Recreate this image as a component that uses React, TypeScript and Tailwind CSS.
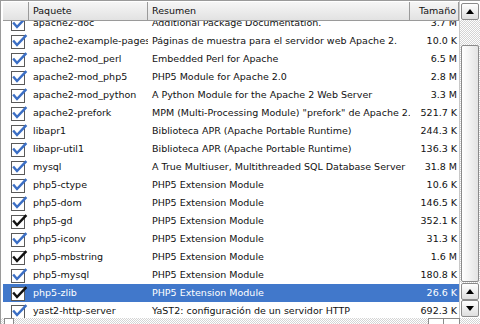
import React from 'react'

type Row = { name: string; summary: string; size: string; dark?: boolean }

const rows: Row[] = [
  { name: 'apache2-doc', summary: 'Additional Package Documentation.', size: '3.7 M' },
  { name: 'apache2-example-pages', summary: 'Páginas de muestra para el servidor web Apache 2.', size: '10.0 K' },
  { name: 'apache2-mod_perl', summary: 'Embedded Perl for Apache', size: '6.5 M' },
  { name: 'apache2-mod_php5', summary: 'PHP5 Module for Apache 2.0', size: '2.8 M' },
  { name: 'apache2-mod_python', summary: 'A Python Module for the Apache 2 Web Server', size: '3.3 M' },
  { name: 'apache2-prefork', summary: 'MPM (Multi-Processing Module) "prefork" de Apache 2.', size: '521.7 K' },
  { name: 'libapr1', summary: 'Biblioteca APR (Apache Portable Runtime)', size: '244.3 K' },
  { name: 'libapr-util1', summary: 'Biblioteca APR (Apache Portable Runtime)', size: '136.3 K' },
  { name: 'mysql', summary: 'A True Multiuser, Multithreaded SQL Database Server', size: '31.8 M' },
  { name: 'php5-ctype', summary: 'PHP5 Extension Module', size: '10.6 K' },
  { name: 'php5-dom', summary: 'PHP5 Extension Module', size: '146.5 K' },
  { name: 'php5-gd', summary: 'PHP5 Extension Module', size: '352.1 K', dark: true },
  { name: 'php5-iconv', summary: 'PHP5 Extension Module', size: '31.3 K' },
  { name: 'php5-mbstring', summary: 'PHP5 Extension Module', size: '1.6 M', dark: true },
  { name: 'php5-mysql', summary: 'PHP5 Extension Module', size: '180.8 K' },
  { name: 'php5-zlib', summary: 'PHP5 Extension Module', size: '26.6 K', dark: true },
  { name: 'yast2-http-server', summary: 'YaST2: configuración de un servidor HTTP', size: '692.3 K' },
]

const SELECTED = 'php5-zlib'

function Check({ dark }: { dark?: boolean }) {
  return (
    <svg width="17" height="16" viewBox="0 0 17 16" className="block">
      <rect x="0.5" y="2.5" width="13" height="13" fill="#fff" stroke="#5a5a5a" />
      <path
        d="M3 8.5 L6 12 L14.5 3"
        fill="none"
        stroke={dark ? '#111' : '#3b6ec4'}
        strokeWidth="2.5"
        strokeLinecap="square"
      />
    </svg>
  )
}

function ArrowButton({ up }: { up?: boolean }) {
  return (
    <div className="h-[17px] w-[18px] flex items-center justify-center border border-[#8a8a8a] rounded-[2px] bg-gradient-to-b from-white to-[#dedede]">
      <svg width="8" height="5" viewBox="0 0 8 5">
        <path d={up ? 'M0 5 L4 0 L8 5 Z' : 'M0 0 L4 5 L8 0 Z'} fill="#000" />
      </svg>
    </div>
  )
}

const track =
  'bg-[repeating-conic-gradient(#d4d4d4_0_25%,#ffffff_0_50%)] bg-[length:2px_2px]'

export default function App() {
  return (
    <div
      className="w-[480px] h-[324px] overflow-hidden bg-white flex flex-col text-[9.5px] text-[#111]"
      style={{ fontFamily: '"DejaVu Sans", Verdana, sans-serif' }}
    >
      <div className="flex h-[318px] border-t border-l border-[#9a9a9a]">
        {/* table */}
        <div className="w-[458px] flex flex-col pl-[2px]">
          <div className="h-[19px] flex bg-gradient-to-b from-[#f6f6f6] to-[#e2e2e2] border-b border-[#9a9a9a] mt-[1px]">
            <div className="w-[26px] border-r border-[#9a9a9a]" />
            <div className="w-[119px] border-r border-[#9a9a9a] pl-[4px] flex items-center">Paquete</div>
            <div className="w-[262px] border-r border-[#9a9a9a] pl-[4px] flex items-center">Resumen</div>
            <div className="flex-1 flex items-center justify-end pr-[2px] border-r border-[#9a9a9a]">Tamaño</div>
          </div>
          <div className="flex-1 overflow-hidden">
            <div className="mt-[-7px]">
              {rows.map((r) => {
                const sel = r.name === SELECTED
                return (
                  <div
                    key={r.name}
                    className={`h-[18px] flex items-center ${sel ? 'bg-[#4178cb] text-white' : ''}`}
                  >
                    <div className="w-[26px] pl-[8px]">
                      <Check dark={r.dark} />
                    </div>
                    <div className="w-[119px] pl-[4px] whitespace-nowrap overflow-hidden">{r.name}</div>
                    <div className="w-[262px] pl-[4px] whitespace-nowrap overflow-hidden">{r.summary}</div>
                    <div className="flex-1 text-right pr-[2px] whitespace-nowrap">{r.size}</div>
                  </div>
                )
              })}
            </div>
          </div>
        </div>
        {/* vertical scrollbar */}
        <div className="w-[21px] flex flex-col items-center pt-[2px] pb-[1px] border-l border-[#c8c8c8]">
          <ArrowButton up />
          <div className={`w-full flex-1 flex flex-col ${track}`}>
            <div className="h-[25px]" />
            <div className="mx-[1px] h-[237px] border border-[#8a8a8a] rounded-[2px] bg-gradient-to-r from-white to-[#e4e4e4]" />
            <div className="flex-1" />
          </div>
          <ArrowButton up />
          <ArrowButton />
        </div>
      </div>
      {/* horizontal scrollbar */}
      <div className={`flex-1 flex border-l border-[#9a9a9a] ${track}`}>
        <div className="w-[10px] ml-[3px] border-l border-t border-r border-[#8a8a8a] bg-white" />
        <div className="flex-1" />
        <div className="w-[16px] border-l border-t border-r border-[#8a8a8a] bg-white" />
        <div className="w-[16px] border-r border-t border-[#8a8a8a] bg-white mr-[20px]" />
      </div>
    </div>
  )
}
